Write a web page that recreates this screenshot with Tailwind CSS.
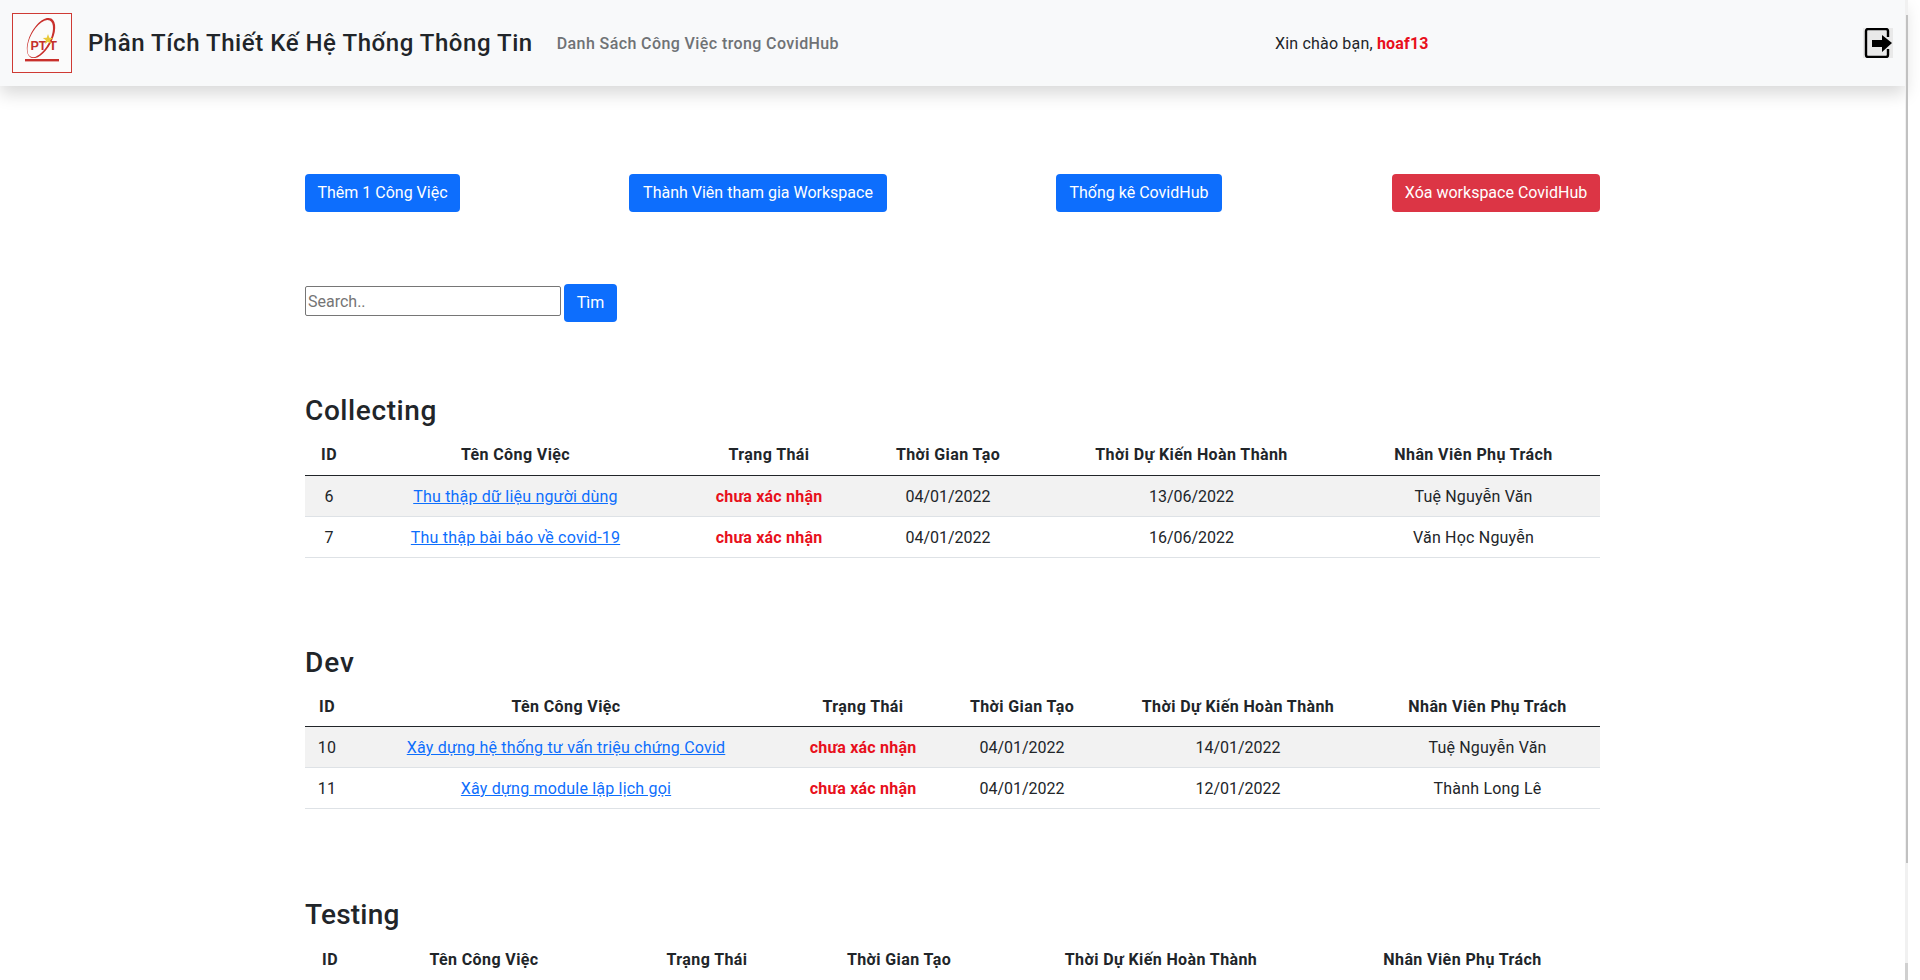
<!DOCTYPE html>
<html lang="vi">
<head>
  <meta charset="UTF-8" />
  <title>Danh Sách Công Việc trong CovidHub</title>
  <script src="https://cdn.jsdelivr.net/npm/@tailwindcss/browser@4"></script>
</head>
<body class="relative h-[980px] overflow-hidden bg-white text-[#212529] font-['Roboto',sans-serif] text-base">
  <div class="w-[1905px]">
    <!-- Navigation -->
    <nav class="flex h-[86px] items-center bg-[#f8f9fa] shadow-[0_8px_16px_rgba(0,0,0,0.15)]">
      <svg class="ml-3 h-[60px] w-[60px] shrink-0" viewBox="0 0 60 60" xmlns="http://www.w3.org/2000/svg">
        <rect x="0.5" y="0.5" width="59" height="59" fill="#fbfbfb" stroke="#cf3a34" stroke-width="1" />
        <ellipse cx="29" cy="25" rx="11" ry="22" transform="rotate(28 29 25)" fill="#c9302c" />
        <ellipse cx="28.2" cy="25.6" rx="9.6" ry="20.4" transform="rotate(28 28.2 25.6)" fill="#fbfbfb" />
        <text x="18.5" y="37" font-family="Liberation Sans, sans-serif" font-size="13" font-weight="700" textLength="16" lengthAdjust="spacingAndGlyphs" fill="#c4302b">PT</text>
        <text x="37" y="37" font-family="Liberation Sans, sans-serif" font-size="13" font-weight="700" fill="#c4302b">T</text>
        <path d="M36 21l1.3 3.8 3.9.1-3.1 2.4 1.1 3.8-3.2-2.3-3.2 2.3 1.1-3.8-3.1-2.4 3.9-.1z" fill="#e8c93a" />
        <rect x="13" y="46" width="34" height="2.4" fill="#c9302c" />
      </svg>
      <span class="ml-4 text-2xl font-medium tracking-[0.55px]">Phân Tích Thiết Kế Hệ Thống Thông Tin</span>
      <span class="ml-[24px] pt-0.5 font-medium tracking-[0.4px] text-[#6f7275]">Danh Sách Công Việc trong CovidHub</span>
      <span class="ml-[436px] pt-0.5 tracking-[0.18px]">Xin chào bạn, <b class="font-bold text-[#e8101c]">hoaf13</b></span>
      <svg class="ml-auto mr-3 h-[30px] w-[30px] shrink-0" viewBox="0 0 30 30" xmlns="http://www.w3.org/2000/svg">
        <rect width="30" height="30" fill="#e9e9e9" />
        <path d="M25 9V3a2 2 0 0 0-2-2H5a2 2 0 0 0-2 2v24a2 2 0 0 0 2 2h18a2 2 0 0 0 2-2v-6" fill="none" stroke="#000" stroke-width="2.4" />
        <path d="M9 13h10V8l10 8-10 9v-5H9z" transform="translate(0 -1)" fill="#000" />
      </svg>
    </nav>

    <main class="mx-auto w-[1295px]">
      <!-- Actions -->
      <div class="mt-[88px] flex">
        <button class="h-[38px] w-[155px] rounded bg-[#0d6efd] text-white">Thêm 1 Công Việc</button>
        <button class="ml-[169px] h-[38px] w-[258px] rounded bg-[#0d6efd] text-white">Thành Viên tham gia Workspace</button>
        <button class="ml-[169px] h-[38px] w-[166px] rounded bg-[#0d6efd] text-white">Thống kê CovidHub</button>
        <button class="ml-[170px] h-[38px] w-[208px] rounded bg-[#dc3545] text-white">Xóa workspace CovidHub</button>
      </div>

      <!-- Search -->
      <div class="mt-[72px] flex items-center gap-[3px]">
        <input type="text" placeholder="Search.." class="mb-[4px] h-[30px] w-[256px] rounded-[2px] border border-[#767676] px-0.5 placeholder:text-[#757575]" />
        <button class="h-[38px] w-[53px] rounded bg-[#0d6efd] text-white">Tìm</button>
      </div>

      <!-- Collecting -->
      <h3 class="mt-[72px] mb-[7px] text-[28px]/[34px] font-medium tracking-[0.6px]">Collecting</h3>
      <table class="w-full table-fixed border-collapse text-center">
        <colgroup>
          <col class="w-[48px]" /><col class="w-[325px]" /><col class="w-[182px]" /><col class="w-[176px]" /><col class="w-[311px]" /><col class="w-[253px]" />
        </colgroup>
        <thead>
          <tr class="h-[40px] border-b border-[#212529] font-bold tracking-[0.4px]">
            <th>ID</th><th>Tên Công Việc</th><th>Trạng Thái</th><th>Thời Gian Tạo</th><th>Thời Dự Kiến Hoàn Thành</th><th>Nhân Viên Phụ Trách</th>
          </tr>
        </thead>
        <tbody class="[&_td]:pt-0.5">
          <tr class="h-[41px] border-b border-[#dee2e6] bg-[#f2f2f2] tracking-[0.2px]">
            <td>6</td><td><a href="#" class="text-[#0d6efd] underline">Thu thập dữ liệu người dùng</a></td><td class="font-bold text-[#e8101c]">chưa xác nhận</td><td class="tracking-normal">04/01/2022</td><td class="tracking-normal">13/06/2022</td><td>Tuệ Nguyễn Văn</td>
          </tr>
          <tr class="h-[41px] border-b border-[#dee2e6] tracking-[0.2px]">
            <td>7</td><td><a href="#" class="text-[#0d6efd] underline">Thu thập bài báo về covid-19</a></td><td class="font-bold text-[#e8101c]">chưa xác nhận</td><td class="tracking-normal">04/01/2022</td><td class="tracking-normal">16/06/2022</td><td>Văn Học Nguyễn</td>
          </tr>
        </tbody>
      </table>

      <!-- Dev -->
      <h3 class="mt-[88px] mb-[7px] text-[28px]/[34px] font-medium tracking-[1px]">Dev</h3>
      <table class="w-full table-fixed border-collapse text-center">
        <colgroup>
          <col class="w-[44px]" /><col class="w-[434px]" /><col class="w-[160px]" /><col class="w-[158px]" /><col class="w-[274px]" /><col class="w-[225px]" />
        </colgroup>
        <thead>
          <tr class="h-[40px] border-b border-[#212529] font-bold tracking-[0.4px]">
            <th class="pt-0.5">ID</th><th class="pt-0.5">Tên Công Việc</th><th class="pt-0.5">Trạng Thái</th><th class="pt-0.5">Thời Gian Tạo</th><th class="pt-0.5">Thời Dự Kiến Hoàn Thành</th><th class="pt-0.5">Nhân Viên Phụ Trách</th>
          </tr>
        </thead>
        <tbody class="[&_td]:pt-0.5">
          <tr class="h-[41px] border-b border-[#dee2e6] bg-[#f2f2f2] tracking-[0.2px]">
            <td>10</td><td><a href="#" class="text-[#0d6efd] underline">Xây dựng hệ thống tư vấn triệu chứng Covid</a></td><td class="font-bold text-[#e8101c]">chưa xác nhận</td><td class="tracking-normal">04/01/2022</td><td class="tracking-normal">14/01/2022</td><td>Tuệ Nguyễn Văn</td>
          </tr>
          <tr class="h-[41px] border-b border-[#dee2e6] tracking-[0.2px]">
            <td>11</td><td><a href="#" class="text-[#0d6efd] underline">Xây dựng module lập lịch gọi</a></td><td class="font-bold text-[#e8101c]">chưa xác nhận</td><td class="tracking-normal">04/01/2022</td><td class="tracking-normal">12/01/2022</td><td>Thành Long Lê</td>
          </tr>
        </tbody>
      </table>

      <!-- Testing -->
      <h3 class="mt-[89px] mb-[7px] text-[28px]/[34px] font-medium tracking-[0.2px]">Testing</h3>
      <table class="w-full table-fixed border-collapse text-center">
        <colgroup>
          <col class="w-[50px]" /><col class="w-[258px]" /><col class="w-[188px]" /><col class="w-[196px]" /><col class="w-[328px]" /><col class="w-[275px]" />
        </colgroup>
        <thead>
          <tr class="h-[42px] border-b border-[#212529] font-bold tracking-[0.4px]">
            <th>ID</th><th>Tên Công Việc</th><th>Trạng Thái</th><th>Thời Gian Tạo</th><th>Thời Dự Kiến Hoàn Thành</th><th>Nhân Viên Phụ Trách</th>
          </tr>
        </thead>
      </table>
    </main>
  </div>

  <!-- Scrollbar -->
  <div class="absolute top-0 bottom-0 left-[1905px] w-[3px] bg-[#f1f1f1]">
    <div class="absolute top-[15px] right-0 h-[848px] w-[2px] bg-[#c1c1c1]"></div>
    <div class="absolute bottom-0 h-[17px] w-full bg-[#d0d0d0]"></div>
  </div>
</body>
</html>
